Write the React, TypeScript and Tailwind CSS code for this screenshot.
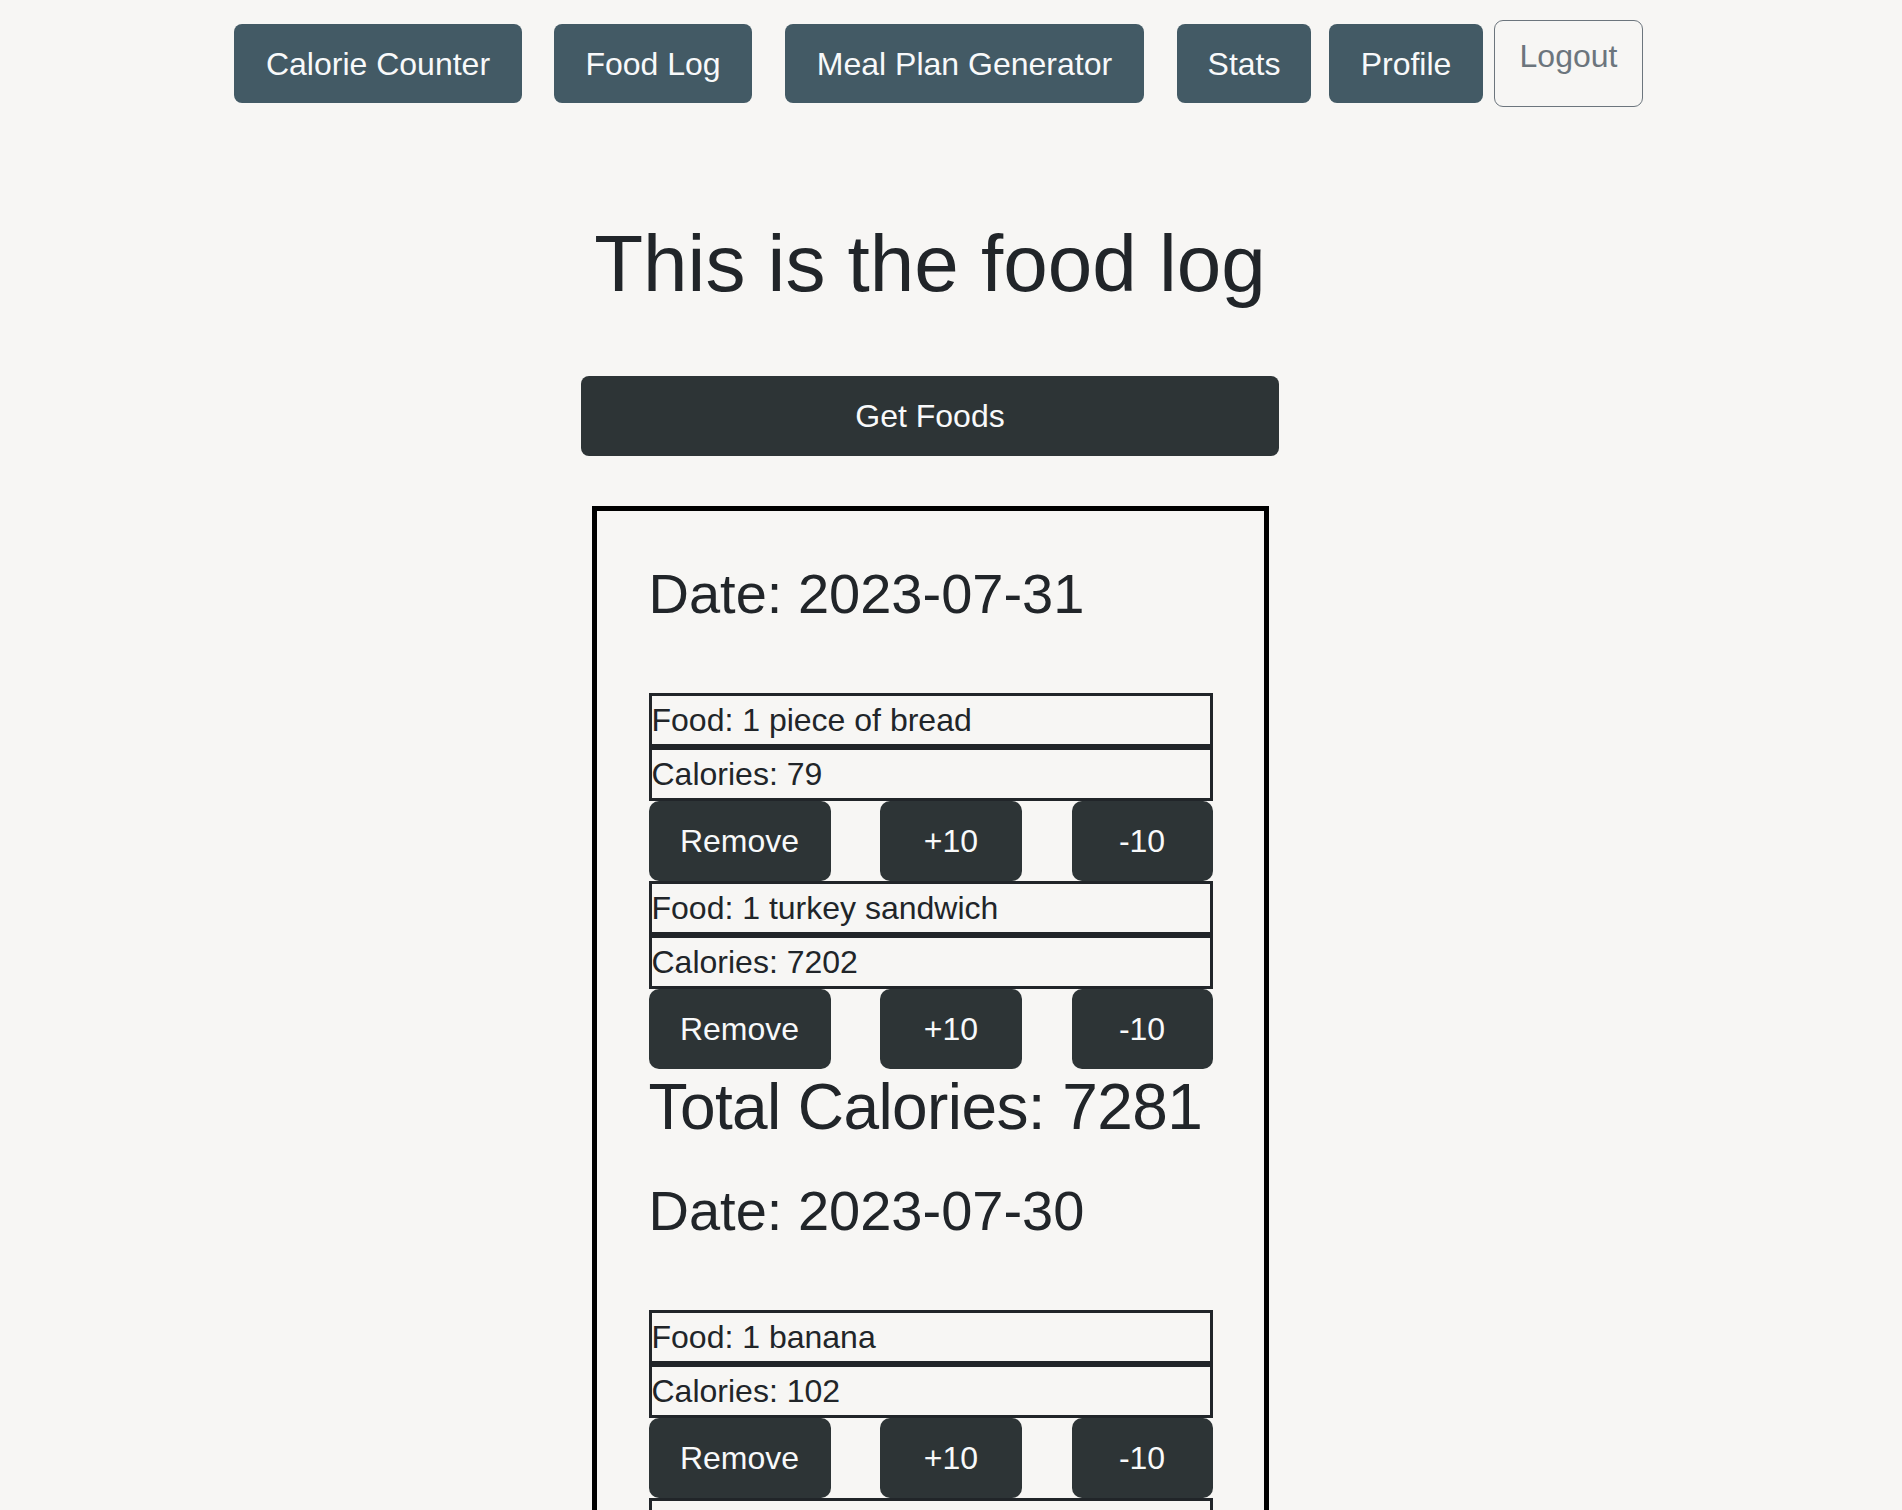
import React from 'react';

const navItems = [
  { label: 'Calorie Counter', w: 'w-[288px]', ml: '' },
  { label: 'Food Log', w: 'w-[198px]', ml: 'ml-[32px]' },
  { label: 'Meal Plan Generator', w: 'w-[359px]', ml: 'ml-[33px]' },
  { label: 'Stats', w: 'w-[134px]', ml: 'ml-[33px]' },
  { label: 'Profile', w: 'w-[154px]', ml: 'ml-[18px]' },
];

const days = [
  {
    date: '2023-07-31',
    foods: [
      { name: '1 piece of bread', calories: 79 },
      { name: '1 turkey sandwich', calories: 7202 },
    ],
  },
  {
    date: '2023-07-30',
    foods: [
      { name: '1 banana', calories: 102 },
      { name: '1 apple', calories: 95 },
    ],
  },
];

const FoodItem: React.FC<{ name: string; calories: number }> = ({ name, calories }) => (
  <div>
    <div className="border-[3px] border-[#212529] leading-[48px] text-[32px]">Food: {name}</div>
    <div className="border-[3px] border-[#212529] leading-[48px] text-[32px]">Calories: {calories}</div>
    <div className="flex justify-between">
      <button className="w-[182px] h-[80px] rounded-[10px] bg-[#2d3436] text-[32px] text-[#f8f9fa]">Remove</button>
      <button className="w-[142px] h-[80px] rounded-[10px] bg-[#2d3436] text-[32px] text-[#f8f9fa]">+10</button>
      <button className="w-[141px] h-[80px] rounded-[10px] bg-[#2d3436] text-[32px] text-[#f8f9fa]">-10</button>
    </div>
  </div>
);

const App: React.FC = () => {
  return (
    <div className="min-h-screen bg-[#f7f6f4] text-[#212529] font-['Liberation_Sans',Arial,sans-serif]">
      {/* Nav */}
      <div className="flex items-start pl-[234px] pt-[24px] h-[107px]">
        {navItems.map((item) => (
          <button
            key={item.label}
            className={`${item.w} ${item.ml} h-[79px] rounded-[8px] bg-[#435a65] text-[32px] text-[#f8f9fa]`}
          >
            {item.label}
          </button>
        ))}
        <button className="w-[149px] h-[87px] ml-[11px] -mt-[4px] pt-[10px] pb-[26px] rounded-[9px] border-[1.5px] border-[#6c757d] text-[32px] leading-[48px] text-[#6c757d]">
          Logout
        </button>
      </div>

      {/* Main */}
      <div className="w-[1860px] flex flex-col items-center">
        <h1 className="mt-[109px] text-[80px] leading-[96px]">This is the food log</h1>

        <button className="mt-[64px] w-[698px] h-[80px] rounded-[8px] bg-[#2d3436] text-[32px] text-[#f8f9fa]">
          Get Foods
        </button>

        <div className="mt-[50px] w-[677px] border-[5px] border-black pt-[33px] pl-[52px] pr-[51px] pb-[40px]">
          {days.map((day) => (
            <div key={day.date}>
              <h3 className="mt-[16px] mb-[66px] text-[56px] leading-[67px] whitespace-nowrap">Date: {day.date}</h3>
              {day.foods.map((f) => (
                <FoodItem key={f.name} name={f.name} calories={f.calories} />
              ))}
              <h2 className="text-[64px] leading-[77px] mb-[31px] whitespace-nowrap tracking-[-0.6px]">
                Total Calories: {day.foods.reduce((s, f) => s + f.calories, 0)}
              </h2>
            </div>
          ))}
        </div>
      </div>
    </div>
  );
};

export default App;
